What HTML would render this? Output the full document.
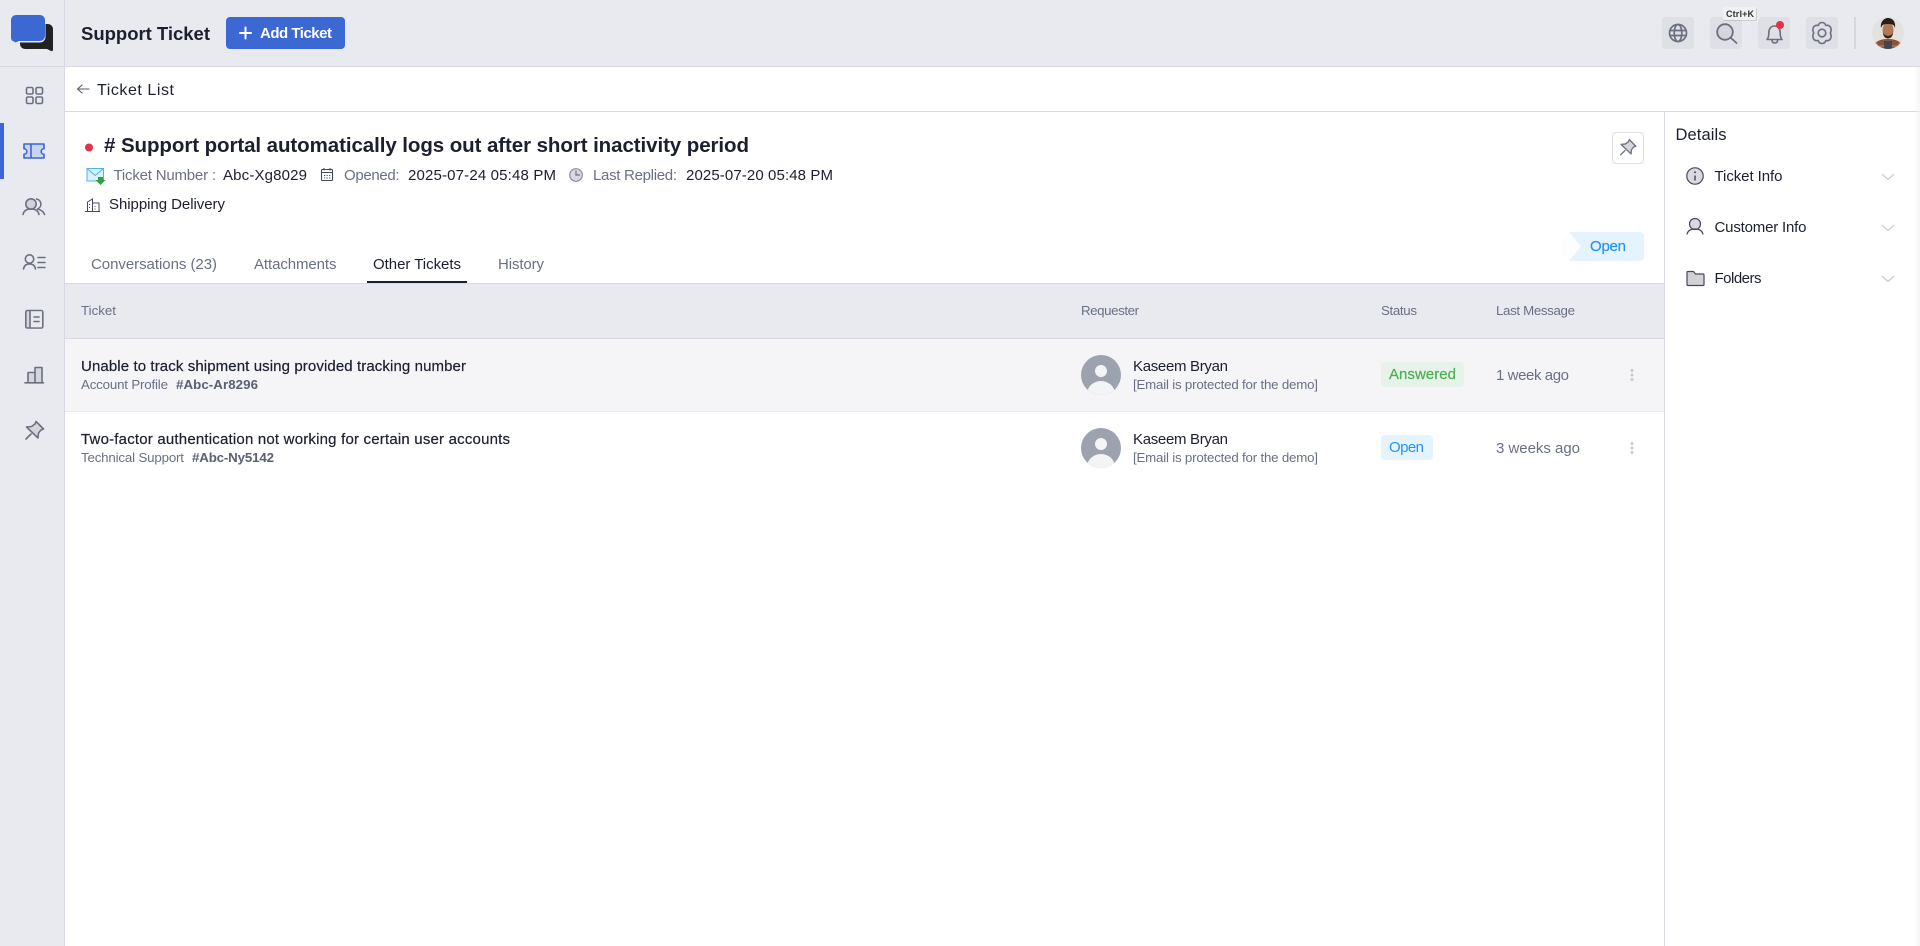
<!DOCTYPE html>
<html lang="en">
<head>
<meta charset="utf-8">
<title>Support Ticket</title>
<style>
html,body{margin:0;padding:0;width:1920px;height:946px;overflow:hidden;background:#fff;font-family:"Liberation Sans",Arial,sans-serif}
.b{position:absolute}
svg{position:absolute;left:0;top:0}
text{font-family:"Liberation Sans",Arial,sans-serif;white-space:pre}
.dk{fill:#1c1f2e}
.md{fill:#6a7084}
.m5{stroke-width:.2px;stroke:currentColor;paint-order:stroke}
.ic{fill:none;stroke:#6b7080;stroke-width:1.6;stroke-linecap:round;stroke-linejoin:round}
.ifill{fill:#d5d6dc;stroke:#6b7080;stroke-width:1.6;stroke-linecap:round;stroke-linejoin:round}
</style>
</head>
<body>
<!-- regions -->
<div class="b" style="left:0;top:0;width:1920px;height:66px;background:#e9eaef;border-bottom:1px solid #d8d8e4"></div>
<div class="b" style="left:0;top:67px;width:64px;height:879px;background:#e9eaef"></div>
<div class="b" style="left:64px;top:0;width:1px;height:946px;background:#d8d8e4"></div>
<div class="b" style="left:65px;top:111px;width:1855px;height:1px;background:#d8d8e4"></div>
<div class="b" style="left:0;top:123px;width:4px;height:56px;background:#3b68d3"></div>
<div class="b" style="left:1664px;top:112px;width:1px;height:834px;background:#d8d8e4"></div>
<div class="b" style="left:1914px;top:67px;width:6px;height:879px;background:linear-gradient(90deg,rgba(240,240,244,0),rgba(240,240,244,.6))"></div>
<!-- table -->
<div class="b" style="left:65px;top:283px;width:1599px;height:1px;background:#d8d8e4"></div>
<div class="b" style="left:65px;top:284px;width:1599px;height:54px;background:#e9eaef;border-bottom:1px solid #d8d8e4"></div>
<div class="b" style="left:65px;top:339px;width:1599px;height:72px;background:#f5f5f8;border-bottom:1px solid #ebebf0"></div>
<div class="b" style="left:367px;top:281px;width:100px;height:2px;background:#1c1f2e"></div>
<!-- button -->
<div class="b" style="left:226px;top:17px;width:119px;height:32px;background:#3b68d3;border-radius:4px"></div>
<!-- top icon buttons -->
<div class="b" style="left:1662px;top:17px;width:32px;height:32px;background:#dfe0e6;border-radius:4px"></div>
<div class="b" style="left:1710px;top:17px;width:32px;height:32px;background:#dfe0e6;border-radius:4px"></div>
<div class="b" style="left:1758px;top:17px;width:32px;height:32px;background:#dfe0e6;border-radius:4px"></div>
<div class="b" style="left:1806px;top:17px;width:32px;height:32px;background:#dfe0e6;border-radius:4px"></div>
<div class="b" style="left:1854px;top:17px;width:2px;height:32px;background:#d5d5e0"></div>
<!-- pin box -->
<div class="b" style="left:1612px;top:132px;width:30px;height:30px;border:1px solid #dedee6;border-radius:4px;background:#fff"></div>
<!-- badges -->
<div class="b" style="left:1381px;top:362px;width:83px;height:25px;background:#e6f2ea;border-radius:4px"></div>
<div class="b" style="left:1381px;top:435px;width:52px;height:25px;background:#e5f3fd;border-radius:4px"></div>

<svg width="1920" height="946" viewBox="0 0 1920 946" xmlns="http://www.w3.org/2000/svg">
<!-- logo -->
<path d="M24 24h24a5 5 0 0 1 5 5v21a1.500 1.500 0 0 1-2 1l-4-2H25a5 5 0 0 1-5-5v-8z" fill="#222"/>
<path d="M16 14.500h24a5.500 5.500 0 0 1 5.500 5.500v17a5.500 5.500 0 0 1-5.500 5.500H20l-4.500 1.500-1.500-1a4 4 0 0 1-3.500-3V20a5.500 5.500 0 0 1 5.500-5.500z" fill="#e9eaef"/>
<path d="M16 15h24a5 5 0 0 1 5 5v16a5 5 0 0 1-5 5H19l-3.500 1.500-1.500-1a3.500 3.500 0 0 1-3-3.500V20a5 5 0 0 1 5-5z" fill="#3b68d3"/>

<!-- sidebar icons -->
<g class="ic">
<rect x="26.500" y="87.500" width="6.500" height="6.500" rx="1.300"/><rect x="36" y="87.500" width="6.500" height="6.500" rx="1.300"/>
<rect x="26.500" y="97" width="6.500" height="6.500" rx="1.300"/><rect x="36" y="97" width="6.500" height="6.500" rx="1.300"/>
</g>
<path d="M24 144h20v4.700a2.800 2.800 0 0 0 0 5.600v3.700H24v-3.700a2.800 2.800 0 0 0 0-5.600z" fill="#c9d5ef" stroke="#3b68d3" stroke-width="1.600" stroke-linejoin="round"/>
<path d="M31 144.500v13" stroke="#3b68d3" stroke-width="1.600"/>
<!-- users -->
<circle cx="31" cy="204" r="5.200" fill="#d0d1d8" stroke="#6b7080" stroke-width="1.600"/>
<path class="ic" d="M23 214.500c.8-4 4-5.500 8-5.500s7.200 1.500 8 5.500M36.500 199a5.200 5.200 0 0 1 1 10c2.500.6 6 2 7 5.500"/>
<!-- user list -->
<circle cx="29.500" cy="259" r="4.200" class="ic"/>
<path class="ic" d="M23.500 269c.6-3.500 3-5 6-5s5.500 1.500 6 5M38 257.500h7M38 262.500h7M38 267.500h7"/>
<!-- book -->
<rect x="25.800" y="310.500" width="17" height="17.500" rx="1.500" class="ifill"/>
<rect x="30" y="311.300" width="12" height="15.900" fill="#e9eaef"/>
<path class="ic" d="M30 311v16.500M34 317h5M34 321.500h5"/>
<!-- chart -->
<path class="ifill" d="M28 382.500v-10h7v-5h7v15M35 372.500v10"/>
<path class="ic" d="M25 382.800h18.500"/>
<!-- pin -->
<path class="ifill" d="M36 421.500l7.500 7.500-2.500 1-2.500 3-.5 5-11.500-11 5-.5 3.500-2.500z"/>
<path class="ic" d="M31 434l-5 5"/>

<!-- header texts -->
<text x="81" y="40" font-size="18.500" font-weight="700" class="dk" textLength="129">Support Ticket</text>
<path d="M245.500 27.500v11M240 33h11" stroke="#fff" stroke-width="2" stroke-linecap="round"/>
<text x="260" y="38" font-size="15" font-weight="700" fill="#fff" textLength="72">Add Ticket</text>

<!-- top icons -->
<g class="ic" style="stroke-width:1.700">
<circle cx="1678" cy="33" r="8.500"/><ellipse cx="1678" cy="33" rx="3.800" ry="8.500"/><path d="M1670 30.500h16M1670 35.500h16"/>
</g>
<circle cx="1725" cy="32" r="7.800" fill="#d5d6dc" stroke="#6b7080" stroke-width="1.800"/><path d="M1731 38l5.500 5" stroke="#6b7080" stroke-width="1.800" stroke-linecap="round"/>
<path d="M1767 39.500c1.500-1.500 1.800-3 1.800-6.500 0-4 2-7 5.700-7s5.700 3 5.700 7c0 3.500.3 5 1.800 6.500z" fill="none" stroke="#6b7080" stroke-width="1.600" stroke-linejoin="round"/>
<path d="M1772 40c0 2 1.200 3 2.800 3s2.800-1 2.800-3" fill="none" stroke="#6b7080" stroke-width="1.600"/>
<circle cx="1780" cy="25" r="4" fill="#e5304a"/>
<g transform="translate(1822 33)" fill="none" stroke="#6b7080" stroke-width="1.600" stroke-linejoin="round">
<path d="M-3.800-7.500C-2.500-11.500 2.500-11.500 3.800-7.500C8-8.500 10.500-4.500 8.300 0C10.500 4.500 8 8.500 3.800 7.500C2.500 11.500-2.500 11.500-3.800 7.500C-8 8.500-10.500 4.500-8.300 0C-10.500-4.500-8-8.500-3.800-7.500Z"/>
<circle r="3.800"/>
</g>

<!-- tooltip -->
<rect x="1723" y="8" width="34" height="13" rx="2" fill="#000" opacity=".12"/>
<rect x="1723" y="7" width="33" height="13" rx="2" fill="#f1f1f4"/>
<text x="1726" y="17" font-size="9" font-weight="700" fill="#333" textLength="28">Ctrl+K</text>

<!-- avatar -->
<circle cx="1888" cy="33" r="16" fill="#e3e2df"/>
<clipPath id="ac"><circle cx="1888" cy="33" r="16"/></clipPath>
<g clip-path="url(#ac)">
<path d="M1873 50c0-7 5-11 15-11s15 4 15 11z" fill="#8b5234"/>
<path d="M1876 42l4 8M1900 42l-4 8M1878 46h6M1892 46h6" stroke="#c48a5e" stroke-width="1"/>
<rect x="1884" y="41" width="8" height="9" fill="#3f4655"/>
<ellipse cx="1888" cy="30" rx="5.500" ry="7.500" fill="#b07a58"/>
<path d="M1881 28c-1-6 3-10 7-10s8 3 7 10c-1-3-2-4-7-4s-6 1-7 4z" fill="#2c1d16"/>
<path d="M1883 32c1 5 9 5 10 0 0 4-2 6.500-5 6.500s-5-2.500-5-6.500z" fill="#3a2619"/>
</g>

<!-- ticket list -->
<path d="M89 89H78M82 85l-4.500 4 4.500 4" fill="none" stroke="#555a6a" stroke-width="1.100" stroke-linecap="round" stroke-linejoin="round"/>
<text x="97" y="95" font-size="16" class="dk" textLength="77">Ticket List</text>

<!-- title -->
<circle cx="89" cy="147.500" r="4" fill="#e5304a"/>
<text x="104" y="152" font-size="20.500" font-weight="700" class="dk" textLength="645">&#35; Support portal automatically logs out after short inactivity period</text>

<!-- meta -->
<rect x="87" y="168.500" width="16.500" height="12.500" fill="#d9f1fb" stroke="#4fb5e6" stroke-width="1"/>
<path d="M87 168.500l8.200 7 8.300-7" fill="none" stroke="#4fb5e6" stroke-width="1"/>
<path d="M98 177h5v3h2.500l-5 5-5-5H98z" fill="#2ea043"/>
<text x="113.500" y="180" font-size="15" class="md" textLength="102.500">Ticket Number :</text>
<text x="223" y="180" font-size="15" class="dk" textLength="84">Abc-Xg8029</text>
<rect x="321.500" y="169.500" width="11" height="11" rx="1" fill="none" stroke="#444a5c" stroke-width="1.100"/>
<path d="M321.500 172.500h11M324 168v2.500M330 168v2.500" stroke="#444a5c" stroke-width="1.100"/>
<path d="M324 175.500h1.200M326.500 175.500h1.200M329 175.500h1.200M324 178h1.200M326.500 178h1.200M329 178h1.200" stroke="#444a5c" stroke-width="1"/>
<text x="344" y="180" font-size="15" class="md" textLength="55.500">Opened:</text>
<text x="408" y="180" font-size="15" class="dk" textLength="148">2025-07-24 05:48 PM</text>
<circle cx="576" cy="175" r="6.300" fill="#d8d9e0" stroke="#8a8e9c" stroke-width="1.200"/>
<path d="M576 170.500v4.500h4" fill="none" stroke="#6b7080" stroke-width="1.200"/>
<text x="593" y="180" font-size="15" class="md" textLength="84">Last Replied:</text>
<text x="686" y="180" font-size="15" class="dk" textLength="147">2025-07-20 05:48 PM</text>

<!-- shipping -->
<path d="M85 211.500h15M87.500 211v-9l5-3v12M92.500 203h6.500v8" fill="none" stroke="#444a5c" stroke-width="1"/>
<path d="M89.500 204v1M89.500 207v1M95 206v1M95 208.500v1" stroke="#444a5c" stroke-width="1"/>
<text x="109" y="209" font-size="15" class="dk" textLength="116">Shipping Delivery</text>

<!-- tabs -->
<text x="91" y="269" font-size="15" class="md" textLength="126">Conversations (23)</text>
<text x="254" y="269" font-size="15" class="md" textLength="82.500">Attachments</text>
<text x="373" y="269" font-size="15" class="dk" textLength="88">Other Tickets</text>
<text x="498" y="269" font-size="15" class="md" textLength="46">History</text>

<!-- open tag -->
<ellipse cx="1585" cy="247" rx="24" ry="18" fill="#f6f7fb" opacity=".25"/>
<path d="M1569 232h71a4 4 0 0 1 4 4v21a4 4 0 0 1-4 4h-71l12-14.500z" fill="#e5f3fd"/>
<text x="1590" y="251" font-size="15" fill="#2196f3" class="m5" style="color:#2196f3" textLength="36">Open</text>

<!-- pin button icon -->
<g transform="translate(1628 147) scale(.87) translate(-34.500 -430)">
<path d="M36 421.500l7.500 7.500-2.500 1-2.500 3-.5 5-11.500-11 5-.5 3.500-2.500z" fill="#d5d6dc" stroke="#6b7080" stroke-width="1.500" stroke-linejoin="round"/>
<path d="M31 434l-5 5" stroke="#6b7080" stroke-width="1.500" stroke-linecap="round"/>
</g>

<!-- table header -->
<g font-size="13.300" class="md">
<text x="81" y="315" textLength="35">Ticket</text>
<text x="1081" y="315" textLength="58">Requester</text>
<text x="1381" y="315" textLength="36">Status</text>
<text x="1496" y="315" textLength="79">Last Message</text>
</g>

<!-- row 1 -->
<text x="81" y="371" font-size="15" class="dk m5" style="color:#1c1f2e" textLength="385">Unable to track shipment using provided tracking number</text>
<text x="81" y="389" font-size="13.300" class="md" textLength="87">Account Profile</text>
<text x="176" y="389" font-size="13.300" font-weight="700" fill="#5a6072" textLength="82">&#35;Abc-Ar8296</text>
<!-- row 2 -->
<text x="81" y="444" font-size="15" class="dk m5" style="color:#1c1f2e" textLength="429">Two-factor authentication not working for certain user accounts</text>
<text x="81" y="462" font-size="13.300" class="md" textLength="103">Technical Support</text>
<text x="192" y="462" font-size="13.300" font-weight="700" fill="#5a6072" textLength="82">&#35;Abc-Ny5142</text>

<!-- avatars -->
<clipPath id="a1"><circle cx="1101" cy="375" r="20"/></clipPath>
<clipPath id="a2"><circle cx="1101" cy="448" r="20"/></clipPath>
<circle cx="1101" cy="375" r="20" fill="#9ca3af"/>
<circle cx="1101" cy="371" r="6" fill="#f3f4f6"/>
<ellipse cx="1101" cy="394" rx="14" ry="13" fill="#f3f4f6" clip-path="url(#a1)"/>
<circle cx="1101" cy="448" r="20" fill="#9ca3af"/>
<circle cx="1101" cy="444" r="6" fill="#f3f4f6"/>
<ellipse cx="1101" cy="467" rx="14" ry="13" fill="#f3f4f6" clip-path="url(#a2)"/>

<text x="1133" y="371" font-size="15" class="dk" style="color:#1c1f2e" textLength="95">Kaseem Bryan</text>
<text x="1133" y="389" font-size="13.300" class="md" textLength="185">[Email is protected for the demo]</text>
<text x="1133" y="444" font-size="15" class="dk" style="color:#1c1f2e" textLength="95">Kaseem Bryan</text>
<text x="1133" y="462" font-size="13.300" class="md" textLength="185">[Email is protected for the demo]</text>

<!-- badges text -->
<text x="1389" y="379" font-size="15" fill="#4caf50" class="m5" style="color:#4caf50" textLength="67">Answered</text>
<text x="1389" y="452" font-size="15" fill="#2196f3" textLength="35">Open</text>

<text x="1496" y="380" font-size="15" class="md" textLength="73">1 week ago</text>
<text x="1496" y="453" font-size="15" class="md" textLength="84">3 weeks ago</text>

<!-- dots -->
<g fill="#c6c7d0">
<circle cx="1632" cy="370.500" r="1.500"/><circle cx="1632" cy="375" r="1.500"/><circle cx="1632" cy="379.500" r="1.500"/>
<circle cx="1632" cy="443.500" r="1.500"/><circle cx="1632" cy="448" r="1.500"/><circle cx="1632" cy="452.500" r="1.500"/>
</g>

<!-- details -->
<text x="1675.500" y="140" font-size="16.500" class="dk" textLength="51">Details</text>
<circle cx="1695" cy="176" r="8.200" fill="#d9d9de" stroke="#444a5c" stroke-width="1.200"/>
<path d="M1695 175.500v5" stroke="#444a5c" stroke-width="1.500"/><circle cx="1695" cy="172.300" r="1" fill="#444a5c"/>
<text x="1714.500" y="181" font-size="15" class="dk" textLength="68">Ticket Info</text>
<circle cx="1695" cy="224" r="5.500" fill="#d9d9de" stroke="#444a5c" stroke-width="1.200"/>
<path d="M1687 234c1-3.500 4-5 8-5s7 1.500 8 5" fill="none" stroke="#444a5c" stroke-width="1.200" stroke-linecap="round"/>
<text x="1714.500" y="232" font-size="15" class="dk" textLength="92">Customer Info</text>
<path d="M1687 272.500a1 1 0 0 1 1-1h5.500l2 2.500h7.500a1 1 0 0 1 1 1v9.500a1 1 0 0 1-1 1h-15a1 1 0 0 1-1-1z" fill="#d2d2d6" stroke="#444a5c" stroke-width="1.200" stroke-linejoin="round"/>
<text x="1714.500" y="283" font-size="15" class="dk" textLength="47">Folders</text>
<g fill="none" stroke="#c9cad3" stroke-width="1.200" stroke-linecap="round" stroke-linejoin="round">
<path d="M1882.500 174.500l5.500 5 5.500-5M1882.500 225.500l5.500 5 5.500-5M1882.500 276.500l5.500 5 5.500-5"/>
</g>
</svg>
</body>
</html>
